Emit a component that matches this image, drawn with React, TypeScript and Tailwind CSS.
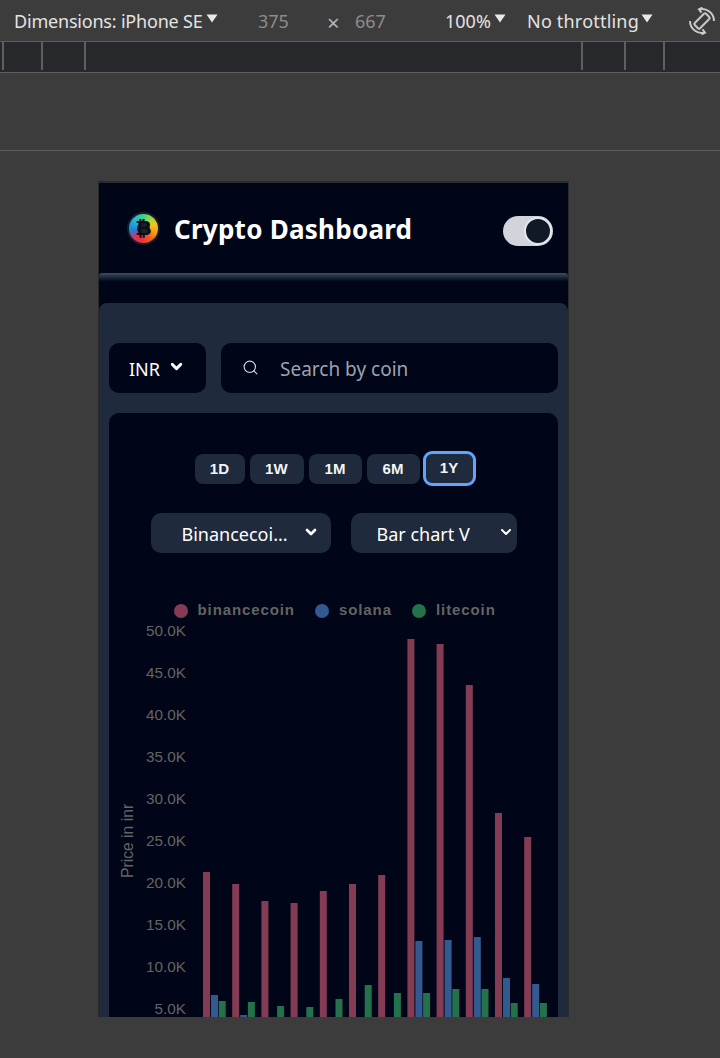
import { ChevronDown, Search } from "lucide-react";

const ui = "font-['Noto_Sans',sans-serif]";

const binance = [872, 884, 901, 903, 891, 884, 875, 639, 644, 685, 813, 837];
const solana = [995, 1015, 0, 0, 0, 0, 0, 941, 940, 937, 978, 984];
const litecoin = [1001, 1002, 1006, 1007, 999, 985, 993, 993, 989, 989, 1003, 1003];
const ticks = ["50.0K", "45.0K", "40.0K", "35.0K", "30.0K", "25.0K", "20.0K", "15.0K", "10.0K", "5.0K"];
const ranges = [
  { label: "1D", width: "w-[50px]" },
  { label: "1W", width: "w-[54px]" },
  { label: "1M", width: "w-[53px]" },
  { label: "6M", width: "w-[53px]" },
];

function Caret() {
  return (
    <svg width="12" height="9" viewBox="0 0 12 9" className="mb-[6px] ml-[4px] shrink-0">
      <path d="M0.5 0.5h11L6 8.5z" fill="#e8e8e8" />
    </svg>
  );
}

function RotateIcon() {
  return (
    <svg width="28" height="28" viewBox="0 0 28 28" fill="none" stroke="#c9c9c9" strokeWidth="2">
      <rect x="10.25" y="6" width="7.5" height="16" rx="1.5" transform="rotate(45 14 14)" />
      <path d="M11 2.4A12 12 0 0 1 26 14" />
      <path d="M2 14A12 12 0 0 0 17 25.6" />
      <path d="M14.5 0.5L11 2.4l2.5 3.2M13.5 27.5l3.5-1.9-2.5-3.2" />
    </svg>
  );
}

function Toolbar() {
  return (
    <div className={`flex h-[41px] items-center pt-[2px] text-[18px] text-[#e3e3e3] ${ui}`}>
      <span className="ml-[14px] w-[188px] whitespace-nowrap tracking-[-0.2px]">Dimensions: iPhone SE</span>
      <Caret />
      <span className="ml-[40px] w-[31px] text-[#8d8d8d]">375</span>
      <span className="ml-[38px] w-[14px] text-[22px] leading-none text-[#b5b5b5]">×</span>
      <span className="ml-[14px] w-[31px] text-[#8d8d8d]">667</span>
      <span className="ml-[59px] w-[45px]">100%</span>
      <Caret />
      <span className="ml-[21px] w-[110px] whitespace-nowrap tracking-[0.2px]">No throttling</span>
      <Caret />
      <div className="-mt-[2px] ml-[35px] shrink-0">
        <RotateIcon />
      </div>
    </div>
  );
}

function Ruler() {
  return (
    <div className="flex h-[32px] items-start border-y border-[#5e5e5e] bg-[#27282c]">
      <div className="ml-[2px] h-[28px] w-[2px] bg-[#5f5f5f]" />
      <div className="ml-[37px] h-[28px] w-[2px] bg-[#5f5f5f]" />
      <div className="ml-[41px] h-[28px] w-[2px] bg-[#5f5f5f]" />
      <div className="ml-[495px] h-[28px] w-[2px] bg-[#5f5f5f]" />
      <div className="ml-[41px] h-[28px] w-[2px] bg-[#5f5f5f]" />
      <div className="ml-[37px] h-[28px] w-[2px] bg-[#5f5f5f]" />
    </div>
  );
}

function Logo() {
  return (
    <div className="flex h-[33px] w-[33px] items-center justify-center rounded-full bg-[#16202e]">
      <div className="flex h-[29px] w-[29px] items-center justify-center rounded-full bg-[conic-gradient(#3fd08a_0deg,#a5d63a_35deg,#f6c21c_70deg,#f99a16_110deg,#f4551f_150deg,#ee2f3e_190deg,#e0305c_225deg,#1f7fd6_260deg,#1fb6e0_310deg,#3fd08a_360deg)]">
        <div className="flex h-[13px] w-[13px] items-center justify-center rounded-full bg-[#1a2230] font-['DejaVu_Sans',sans-serif] text-[20px] font-bold leading-none text-[#0a0d18]">
          ₿
        </div>
      </div>
    </div>
  );
}

function Header() {
  return (
    <>
      <div className="flex h-[90px] items-center bg-[#000517] pl-[28px] pr-[15px]">
        <Logo />
        <h1 className={`ml-[14px] mt-[2px] text-[26px] font-bold tracking-[0.25px] text-white ${ui}`}>Crypto Dashboard</h1>
        <div className="ml-auto mt-[5px] flex h-[30px] w-[50px] items-center justify-end rounded-full bg-[#d1d5db] pr-[1px]">
          <div className="h-[28px] w-[28px] rounded-full border-2 border-[#e5e7eb] bg-[#111827]" />
        </div>
      </div>
      <div className="h-[9px] rounded-t-[3px] bg-gradient-to-b from-[#414c60] to-[#000517]" />
    </>
  );
}

function SearchRow() {
  return (
    <div className={`flex gap-[15px] ${ui}`}>
      <div className="flex h-[50px] w-[97px] items-center rounded-[10px] bg-[#000517] pl-[20px] text-[18px] text-white">
        <span className="mt-[3px]">INR</span>
        <ChevronDown size={17} strokeWidth={4} className="mb-[3px] ml-[8px]" />
      </div>
      <div className="flex h-[50px] flex-1 items-center rounded-[10px] bg-[#000517] pl-[21px] text-[19px] text-[#9ca3af]">
        <Search size={17} strokeWidth={1.6} className="mb-[2px] text-[#d8dade]" />
        <span className="ml-[21px] mt-[3px]">Search by coin</span>
      </div>
    </div>
  );
}

function RangeButtons() {
  return (
    <div className="flex justify-center gap-[5px] pl-[3px] pt-[41px] font-['Liberation_Sans',sans-serif] text-[15px] font-bold tracking-[0.2px] text-[#f3f4f6]">
      {ranges.map((r) => (
        <div key={r.label} className={`flex h-[30px] items-center justify-center rounded-lg bg-[#1f2a3c] ${r.width}`}>
          {r.label}
        </div>
      ))}
      <div className="-ml-[2px] -mt-[3px] flex h-[35px] w-[53px] items-center justify-center rounded-[9px] border-[3px] border-[#60a5fa] bg-[#1f2a3c]">
        1Y
      </div>
    </div>
  );
}

function Dropdowns() {
  return (
    <div className={`mt-[27px] flex justify-center gap-[20px] text-[18px] text-white ${ui}`}>
      <div className="flex h-[40px] w-[180px] items-center rounded-[10px] bg-[#1f2a3c] pl-[31px]">
        <span className="mt-[3px]">Binancecoi...</span>
        <ChevronDown size={16} strokeWidth={4} className="mb-[3px] ml-auto mr-[12px]" />
      </div>
      <div className="flex h-[40px] w-[166px] items-center rounded-[10px] bg-[#1f2a3c] pl-[26px]">
        <span className="mt-[3px]">Bar chart V</span>
        <ChevronDown size={16} strokeWidth={3} className="mb-[2px] ml-auto mr-[3px]" />
      </div>
    </div>
  );
}

function Chart() {
  return (
    <svg viewBox="109 590 449 470" width="449" height="470" className="mt-[37px] block font-['Liberation_Sans',sans-serif]">
      <circle cx="181" cy="611" r="7" fill="#843c54" />
      <text x="197.5" y="615" fill="#646464" fontSize="15" fontWeight="700" letterSpacing="0.9">binancecoin</text>
      <circle cx="322" cy="611" r="7" fill="#335a90" />
      <text x="339" y="615" fill="#646464" fontSize="15" fontWeight="700" letterSpacing="0.9">solana</text>
      <circle cx="419" cy="611" r="7" fill="#24724c" />
      <text x="436" y="615" fill="#646464" fontSize="15" fontWeight="700" letterSpacing="0.9">litecoin</text>
      {ticks.map((t, i) => (
        <text key={t} x="186" y={636 + i * 42} textAnchor="end" fill="#646464" fontSize="15.3">{t}</text>
      ))}
      <text transform="translate(133 878) rotate(-90)" fill="#646464" fontSize="15.7">Price in inr</text>
      {binance.map((top, i) => {
        const x = 203 + i * 29.2;
        return (
          <g key={i}>
            <rect x={x} y={top} width="7" height={1060 - top} fill="#843c54" />
            {solana[i] > 0 && <rect x={x + 8} y={solana[i]} width="7" height={1060 - solana[i]} fill="#335a90" />}
            <rect x={x + 15.7} y={litecoin[i]} width="7" height={1060 - litecoin[i]} fill="#24724c" />
          </g>
        );
      })}
    </svg>
  );
}

export default function App() {
  return (
    <div className="h-[1058px] w-[720px] overflow-hidden bg-[#3c3c3c]">
      <Toolbar />
      <Ruler />
      <div className="h-[78px] border-b border-[#5e5e5e]" />
      <div className="ml-[98px] mt-[30px] h-[836px] w-[471px] overflow-hidden border-x border-t-2 border-[#2b2b2b] bg-[#000517]">
        <Header />
        <div className="mt-[21px] rounded-t-lg bg-[#1f2a3c] px-[10px] pt-[40px]">
          <SearchRow />
          <div className="mt-[20px] rounded-t-[10px] bg-[#000517]">
            <RangeButtons />
            <Dropdowns />
            <Chart />
          </div>
        </div>
      </div>
    </div>
  );
}
